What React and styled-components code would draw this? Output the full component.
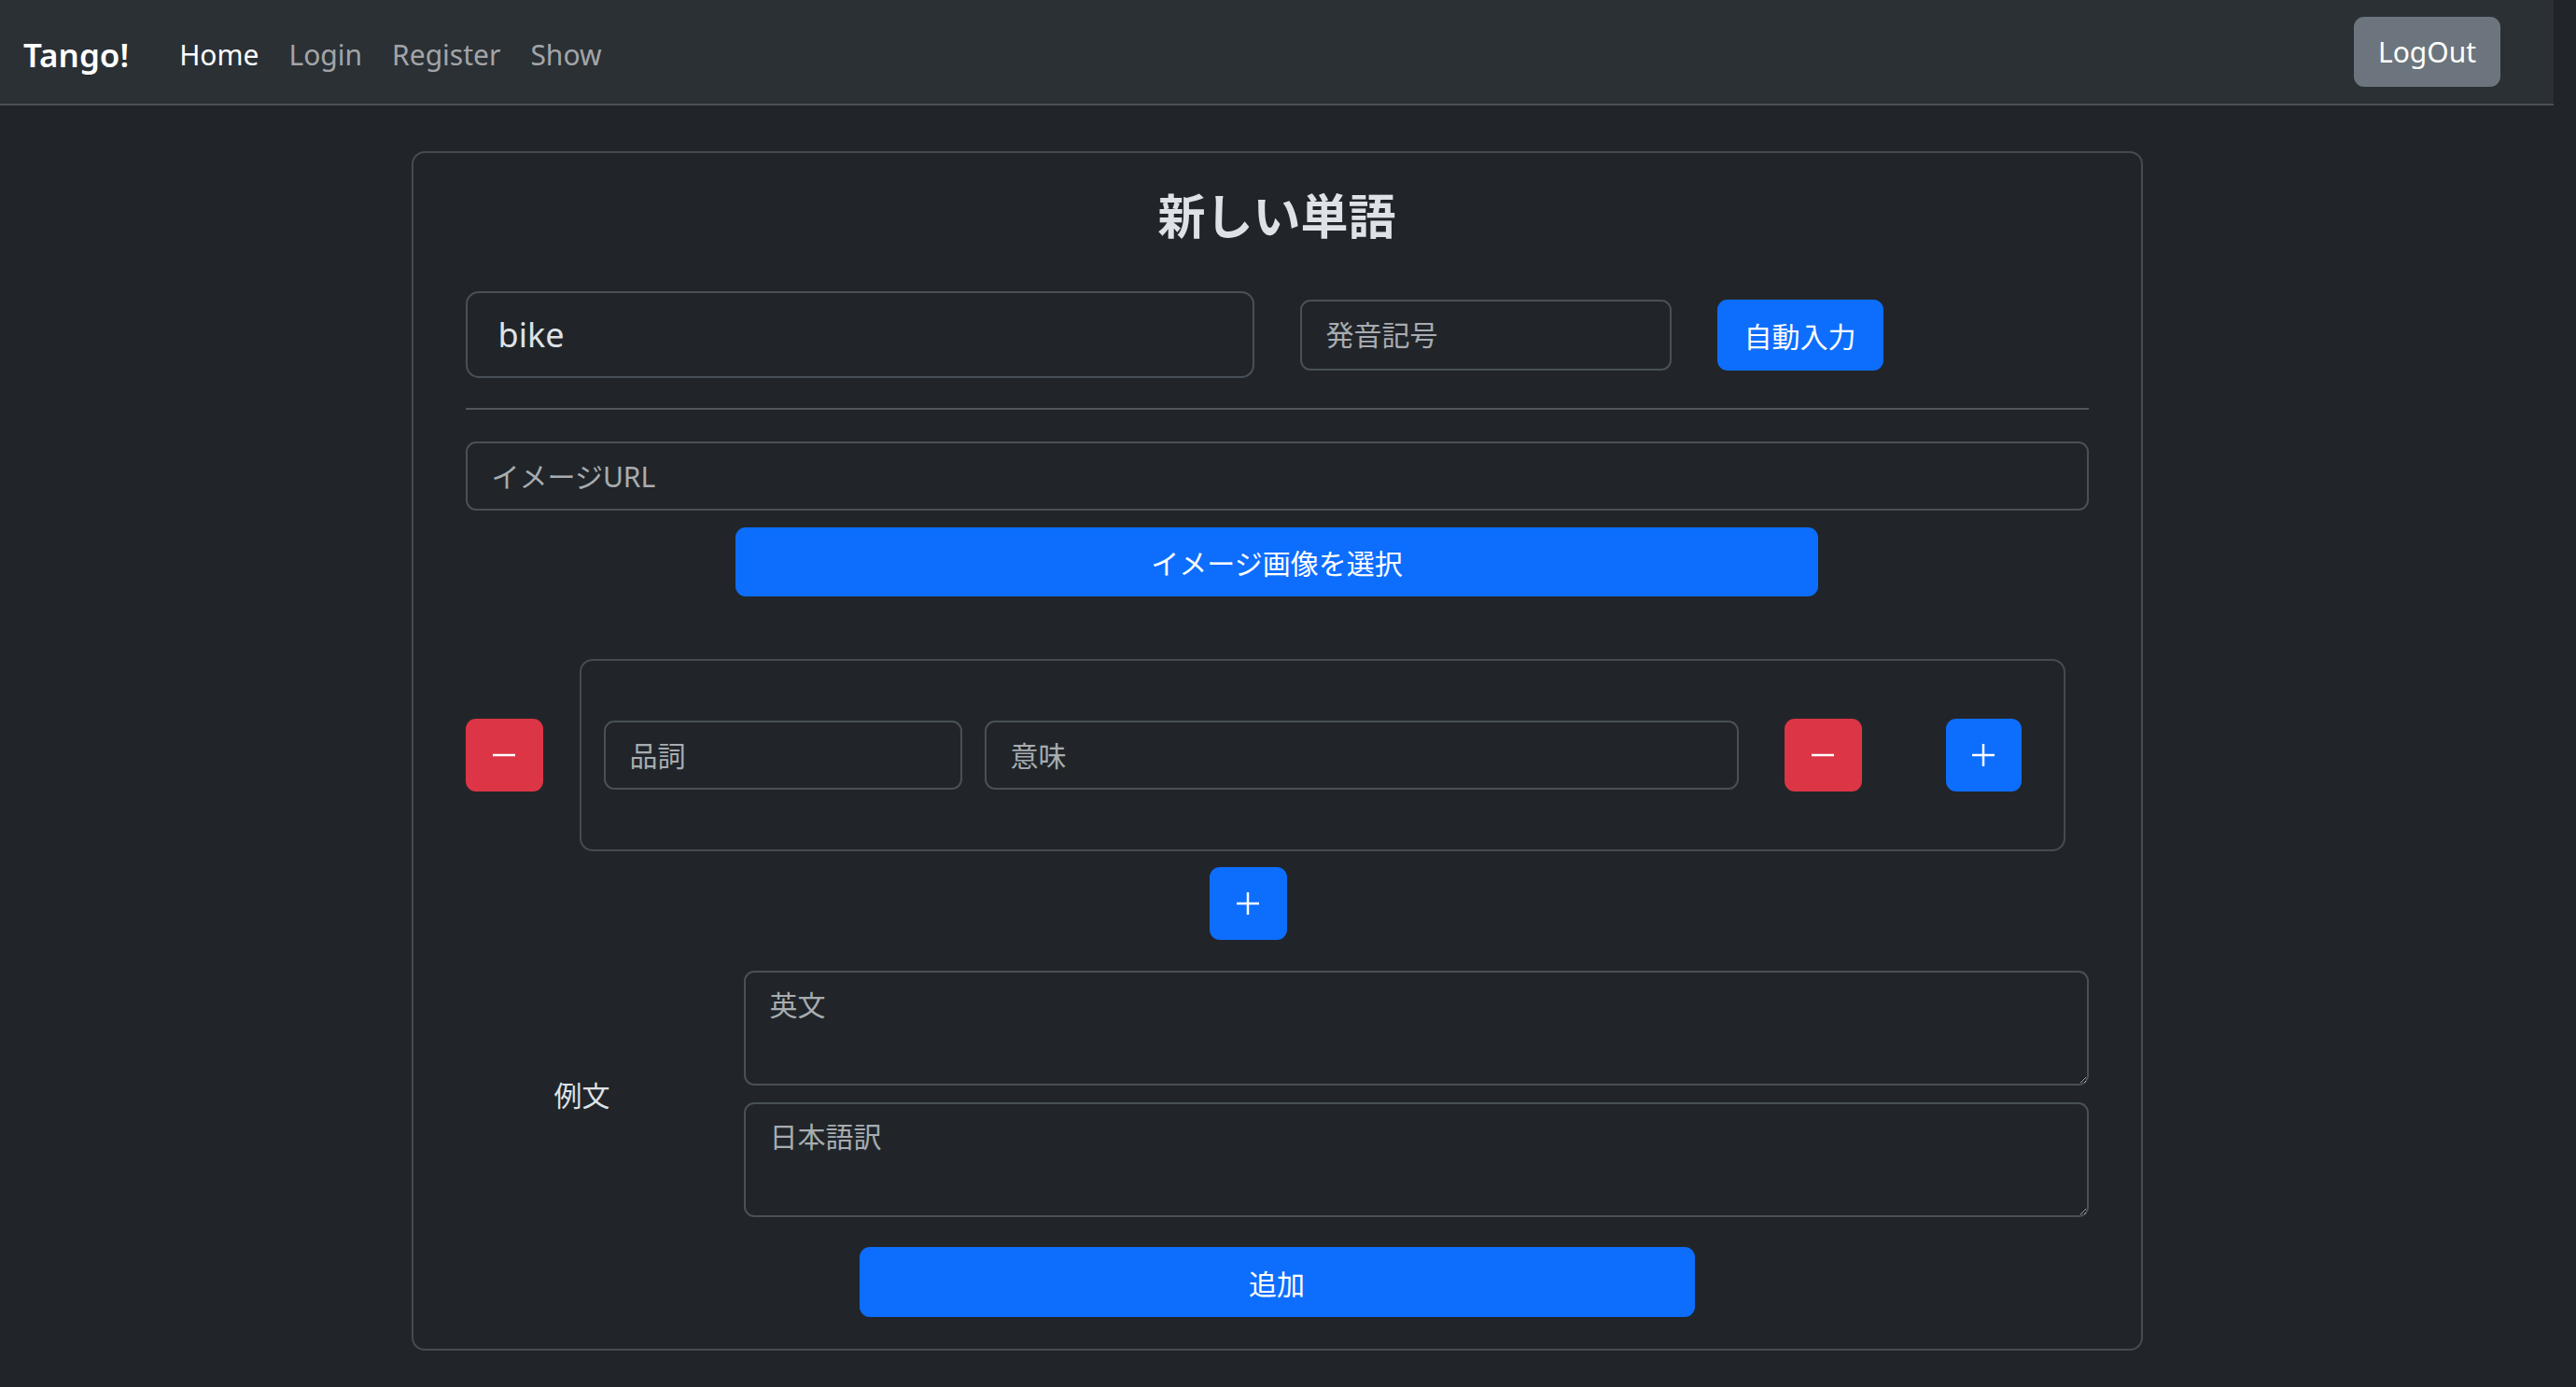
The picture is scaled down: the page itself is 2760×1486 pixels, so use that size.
import React from "react";
import styled, { createGlobalStyle } from "styled-components";

const GlobalStyle = createGlobalStyle`
  html, body {
    margin: 0;
    background: #212529;
    color: #dee2e6;
    color-scheme: dark;
    font-family: "Noto Sans", "Noto Sans CJK JP", sans-serif;
    font-size: 30px;
  }
  * { box-sizing: border-box; }
`;

const Page = styled.div`
  width: 2736px;
  min-height: 1486px;
`;

const Navbar = styled.nav`
  height: 113px;
  display: flex;
  align-items: center;
  padding: 5px 57px 0 25px;
  background: #2b3035;
  border-bottom: 2px solid #4b5056;
`;

const Brand = styled.a`
  font-size: 35px;
  font-weight: 600;
  color: #fff;
  margin-right: 38px;
  text-decoration: none;
`;

const NavLinks = styled.div`
  display: flex;
  flex: 1;
`;

const NavLink = styled.a`
  padding: 0 16px;
  font-size: 30px;
  color: ${(p) => (p.$active ? "#fff" : "rgba(255,255,255,0.58)")};
  text-decoration: none;
`;

const Button = styled.button`
  display: flex;
  align-items: center;
  justify-content: center;
  height: ${(p) => p.$h || 75}px;
  width: ${(p) => (p.$w ? p.$w + "px" : "auto")};
  padding: 0;
  border: none;
  border-radius: 11px;
  font-family: inherit;
  font-size: 30px;
  color: #fff;
  background: ${(p) =>
    p.$variant === "danger" ? "#dc3545" : p.$variant === "secondary" ? "#6c757d" : "#0d6efd"};
  flex-shrink: 0;
`;

const LogOut = styled(Button)`
  margin-top: -5px;
`;

const Card = styled.div`
  width: 1855px;
  margin: 49px auto 0;
  padding: 32px 56px 34px;
  border: 2px solid #464b51;
  border-radius: 14px;
`;

const Title = styled.h2`
  margin: 0 0 46px;
  text-align: center;
  font-size: 51px;
  line-height: 70px;
  font-weight: 700;
  color: #dee2e6;
`;

const Row = styled.div`
  display: flex;
  align-items: center;
  gap: ${(p) => p.$gap || 0}px;
`;

const Input = styled.input`
  display: block;
  width: ${(p) => (p.$w ? p.$w + "px" : "100%")};
  height: ${(p) => p.$h || 75}px;
  padding: 0 ${(p) => p.$pad || 26}px;
  background: #212529;
  border: 2px solid #495057;
  border-radius: ${(p) => p.$r || 11}px;
  color: #dee2e6;
  font-family: inherit;
  font-size: ${(p) => p.$fs || 30}px;
  flex-shrink: 0;
  &::placeholder { color: rgba(222, 226, 230, 0.72); }
`;

const Divider = styled.hr`
  margin: 32px 0 34px;
  border: none;
  border-top: 2px solid #51565b;
`;

const Centered = styled.div`
  display: flex;
  justify-content: center;
  margin-top: ${(p) => p.$mt || 0}px;
`;

const MeaningRow = styled.div`
  display: flex;
  align-items: center;
  gap: 39px;
  margin-top: 67px;
`;

const MeaningBox = styled.div`
  width: 1592px;
  display: flex;
  align-items: center;
  padding: 62px 45px 62px 24px;
  border: 2px solid #464b51;
  border-radius: 14px;
`;

const AddRow = styled.div`
  display: flex;
  padding-left: 797px;
  margin-top: 17px;
`;

const ExampleGrid = styled.div`
  display: grid;
  grid-template-columns: 250px 1fr;
  column-gap: 48px;
  align-items: center;
  margin-top: 33px;
`;

const Label = styled.div`
  text-align: center;
  font-size: 30px;
  color: #dee2e6;
`;

const TextStack = styled.div`
  display: flex;
  flex-direction: column;
  gap: 18px;
`;

const TextArea = styled.textarea`
  display: block;
  width: 100%;
  height: 123px;
  padding: 12px 26px;
  background: #212529;
  border: 2px solid #495057;
  border-radius: 11px;
  color: #dee2e6;
  font-family: inherit;
  font-size: 30px;
  line-height: 1.5;
  &::placeholder { color: rgba(222, 226, 230, 0.72); }
`;

const Minus = () => (
  <svg width="26" height="26" viewBox="0 0 26 26">
    <line x1="1" y1="13" x2="25" y2="13" stroke="#fff" strokeWidth="2.5" />
  </svg>
);

const Plus = () => (
  <svg width="26" height="26" viewBox="0 0 26 26">
    <line x1="1" y1="13" x2="25" y2="13" stroke="#fff" strokeWidth="2.5" />
    <line x1="13" y1="1" x2="13" y2="25" stroke="#fff" strokeWidth="2.5" />
  </svg>
);

export default function App() {
  return (
    <Page>
      <GlobalStyle />
      <Navbar>
        <Brand>Tango!</Brand>
        <NavLinks>
          <NavLink $active>Home</NavLink>
          <NavLink>Login</NavLink>
          <NavLink>Register</NavLink>
          <NavLink>Show</NavLink>
        </NavLinks>
        <LogOut $variant="secondary" $w={157}>LogOut</LogOut>
      </Navbar>

      <Card>
        <Title>新しい単語</Title>

        <Row $gap={49}>
          <Input $w={845} $h={93} $r={14} $pad={33} $fs={36} defaultValue="bike" />
          <Input $w={398} $h={76} placeholder="発音記号" />
          <Button $w={178} $h={76}>自動入力</Button>
        </Row>

        <Divider />

        <Input $h={74} placeholder="イメージURL" />
        <Centered $mt={18}>
          <Button $w={1160} $h={74}>イメージ画像を選択</Button>
        </Centered>

        <MeaningRow>
          <Button $variant="danger" $w={83} $h={78}><Minus /></Button>
          <MeaningBox>
            <Input $w={384} $h={74} placeholder="品詞" />
            <Input $w={808} $h={74} placeholder="意味" style={{ marginLeft: 24 }} />
            <Row $gap={90} style={{ marginLeft: 49 }}>
              <Button $variant="danger" $w={83} $h={78}><Minus /></Button>
              <Button $w={81} $h={78}><Plus /></Button>
            </Row>
          </MeaningBox>
        </MeaningRow>

        <AddRow>
          <Button $w={83} $h={78}><Plus /></Button>
        </AddRow>

        <ExampleGrid>
          <Label>例文</Label>
          <TextStack>
            <TextArea placeholder="英文" />
            <TextArea placeholder="日本語訳" />
          </TextStack>
        </ExampleGrid>

        <Centered $mt={32}>
          <Button $w={895} $h={75}>追加</Button>
        </Centered>
      </Card>
    </Page>
  );
}
